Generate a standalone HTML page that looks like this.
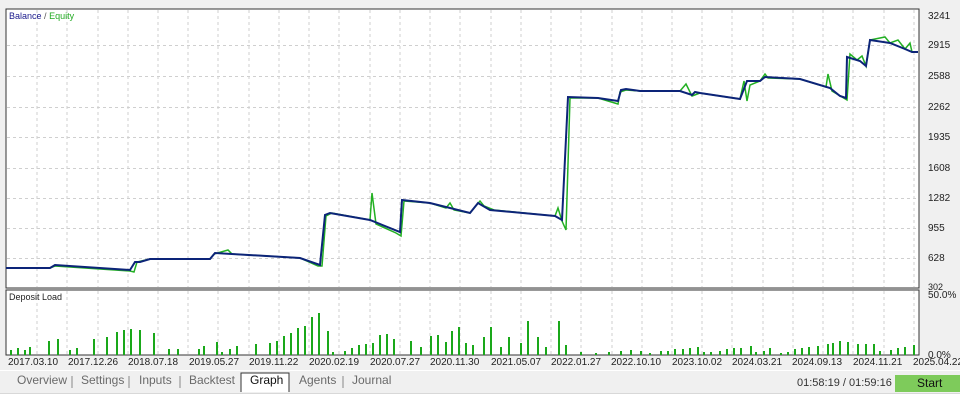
<!DOCTYPE html>
<html><head><meta charset="utf-8"><style>
body{margin:0;width:960px;height:405px;background:#f0f0f0;font-family:"Liberation Sans",sans-serif;position:relative;overflow:hidden}
.t{position:absolute;font-size:10px;color:#222}
.tab{position:absolute;top:373px;font-size:12px;color:#6a6a6a}
</style></head><body>
<svg width="960" height="405" style="position:absolute;left:0;top:0">
<rect x="6" y="9" width="913" height="279" fill="#fff" stroke="#333" stroke-width="1"/>
<rect x="6" y="290" width="913" height="65" fill="#fff" stroke="#333" stroke-width="1"/>
<g stroke="#cfcfcf" stroke-dasharray="3,3" stroke-width="1" id="g">
<path d="M37 10V287M67 10V287M98 10V287M128 10V287M158 10V287M188 10V287M218 10V287M249 10V287M279 10V287M309 10V287M339 10V287M370 10V287M400 10V287M430 10V287M460 10V287M491 10V287M521 10V287M551 10V287M581 10V287M612 10V287M642 10V287M672 10V287M702 10V287M732 10V287M763 10V287M793 10V287M823 10V287M853 10V287M884 10V287M914 10V287"/>
<path d="M37 291V354M67 291V354M98 291V354M128 291V354M158 291V354M188 291V354M218 291V354M249 291V354M279 291V354M309 291V354M339 291V354M370 291V354M400 291V354M430 291V354M460 291V354M491 291V354M521 291V354M551 291V354M581 291V354M612 291V354M642 291V354M672 291V354M702 291V354M732 291V354M763 291V354M793 291V354M823 291V354M853 291V354M884 291V354M914 291V354"/>
<path d="M7 45.5H918M7 76.5H918M7 107.5H918M7 137.5H918M7 168.5H918M7 198.5H918M7 228.5H918M7 258.5H918"/>
</g>
<polyline fill="none" stroke="#22b022" stroke-width="1.5" points="6,268 50,268 55,266 130,271 134,272 137,262 150,259 210,259 214,254 228,250 232,254 300,258 318,266 322,266 326,216 332,213 370,220 372,193 376,224 396,233 401,236 404,201 430,203 446,208 450,203 454,210 470,213 480,201 484,206 494,210 555,216 558,208 562,221 566,230 570,98 598,98 618,104 620,92 626,90 640,91 680,91 686,84 692,96 700,93 740,99 744,81 747,101 750,85 760,81 765,74 768,78 800,79 826,87 828,74 832,91 842,97 847,100 850,54 857,60 862,56 866,66 870,40 885,37 890,43 898,40 905,49 910,43 912,52 918,52"/>
<polyline fill="none" stroke="#0c2478" stroke-width="2" points="6,268 50,268 55,265 130,270 135,262 140,262 150,259 210,259 215,253 300,258 320,265 325,215 330,213 370,220 400,232 402,200 430,203 470,213 478,203 490,210 555,216 562,220 568,97 598,98 618,101 621,90 626,89 640,91 680,91 692,95 695,92 700,93 740,99 747,81 760,81 765,77 800,79 830,88 840,96 846,98 847,57 860,61 866,66 870,40 890,43 905,49 912,52 918,52"/>
<g fill="#1aa81a">
<rect x="10" y="350" width="2" height="5"/><rect x="17" y="348" width="2" height="7"/><rect x="24" y="350" width="2" height="5"/><rect x="29" y="347" width="2" height="8"/><rect x="48" y="341" width="2" height="14"/><rect x="57" y="339" width="2" height="16"/><rect x="69" y="350" width="2" height="5"/><rect x="76" y="348" width="2" height="7"/><rect x="93" y="339" width="2" height="16"/><rect x="106" y="337" width="2" height="18"/><rect x="116" y="332" width="2" height="23"/><rect x="123" y="330" width="2" height="25"/><rect x="130" y="329" width="2" height="26"/><rect x="139" y="330" width="2" height="25"/><rect x="153" y="333" width="2" height="22"/><rect x="168" y="349" width="2" height="6"/><rect x="177" y="349" width="2" height="6"/><rect x="198" y="349" width="2" height="6"/><rect x="203" y="346" width="2" height="9"/><rect x="216" y="342" width="2" height="13"/><rect x="221" y="352" width="2" height="3"/><rect x="229" y="349" width="2" height="6"/><rect x="236" y="346" width="2" height="9"/><rect x="255" y="344" width="2" height="11"/><rect x="269" y="343" width="2" height="12"/><rect x="276" y="341" width="2" height="14"/><rect x="283" y="336" width="2" height="19"/><rect x="290" y="333" width="2" height="22"/><rect x="297" y="328" width="2" height="27"/><rect x="304" y="326" width="2" height="29"/><rect x="311" y="317" width="2" height="38"/><rect x="318" y="313" width="2" height="42"/><rect x="327" y="331" width="2" height="24"/><rect x="332" y="352" width="2" height="3"/><rect x="344" y="351" width="2" height="4"/><rect x="351" y="348" width="2" height="7"/><rect x="358" y="345" width="2" height="10"/><rect x="365" y="344" width="2" height="11"/><rect x="372" y="343" width="2" height="12"/><rect x="379" y="335" width="2" height="20"/><rect x="386" y="334" width="2" height="21"/><rect x="393" y="339" width="2" height="16"/><rect x="410" y="341" width="2" height="14"/><rect x="420" y="347" width="2" height="8"/><rect x="430" y="336" width="2" height="19"/><rect x="437" y="335" width="2" height="20"/><rect x="445" y="342" width="2" height="13"/><rect x="451" y="331" width="2" height="24"/><rect x="458" y="327" width="2" height="28"/><rect x="465" y="343" width="2" height="12"/><rect x="472" y="345" width="2" height="10"/><rect x="483" y="337" width="2" height="18"/><rect x="490" y="327" width="2" height="28"/><rect x="500" y="347" width="2" height="8"/><rect x="508" y="337" width="2" height="18"/><rect x="520" y="343" width="2" height="12"/><rect x="527" y="321" width="2" height="34"/><rect x="537" y="337" width="2" height="18"/><rect x="545" y="347" width="2" height="8"/><rect x="558" y="321" width="2" height="34"/><rect x="565" y="345" width="2" height="10"/><rect x="580" y="352" width="2" height="3"/><rect x="595" y="353" width="2" height="2"/><rect x="608" y="352" width="2" height="3"/><rect x="620" y="351" width="2" height="4"/><rect x="630" y="350" width="2" height="5"/><rect x="640" y="351" width="2" height="4"/>
<rect x="649" y="353" width="2" height="2"/><rect x="660" y="351" width="2" height="4"/><rect x="667" y="351" width="2" height="4"/><rect x="674" y="349" width="2" height="6"/><rect x="682" y="349" width="2" height="6"/><rect x="689" y="348" width="2" height="7"/><rect x="697" y="347" width="2" height="8"/><rect x="703" y="352" width="2" height="3"/><rect x="710" y="352" width="2" height="3"/><rect x="719" y="351" width="2" height="4"/><rect x="726" y="349" width="2" height="6"/><rect x="733" y="348" width="2" height="7"/><rect x="740" y="348" width="2" height="7"/><rect x="750" y="346" width="2" height="9"/><rect x="755" y="352" width="2" height="3"/><rect x="763" y="351" width="2" height="4"/><rect x="769" y="348" width="2" height="7"/><rect x="780" y="353" width="2" height="2"/><rect x="787" y="352" width="2" height="3"/><rect x="794" y="349" width="2" height="6"/><rect x="801" y="348" width="2" height="7"/><rect x="808" y="347" width="2" height="8"/><rect x="817" y="346" width="2" height="9"/><rect x="827" y="344" width="2" height="11"/><rect x="832" y="343" width="2" height="12"/><rect x="839" y="341" width="2" height="14"/><rect x="847" y="342" width="2" height="13"/><rect x="857" y="344" width="2" height="11"/><rect x="865" y="344" width="2" height="11"/><rect x="873" y="344" width="2" height="11"/><rect x="879" y="351" width="2" height="4"/><rect x="890" y="350" width="2" height="5"/><rect x="897" y="348" width="2" height="7"/><rect x="904" y="347" width="2" height="8"/><rect x="913" y="345" width="2" height="10"/>
</g>
<rect x="0" y="370" width="960" height="1" fill="#fff"/>
<rect x="0" y="393" width="960" height="1" fill="#d8d8d8"/>
<rect x="0" y="394" width="960" height="11" fill="#fff"/>
<path d="M241 392V373H289V392" fill="#fff" stroke="#333"/>
<rect x="895" y="375" width="65" height="17" fill="#7ecb5b"/>
<path d="M72 376V388M129 376V388M180 376V388M343 376V388" stroke="#888"/>
</svg>
<div class="t" style="left:9px;top:11px;font-size:9px"><span style="color:#1a1a8c">Balance</span> <span style="color:#555">/</span> <span style="color:#22aa22">Equity</span></div>
<div class="t" style="left:9px;top:292px;font-size:9px">Deposit Load</div>
<div class="t" style="left:928px;top:11px">3241</div>
<div class="t" style="left:928px;top:40px">2915</div>
<div class="t" style="left:928px;top:71px">2588</div>
<div class="t" style="left:928px;top:102px">2262</div>
<div class="t" style="left:928px;top:132px">1935</div>
<div class="t" style="left:928px;top:163px">1608</div>
<div class="t" style="left:928px;top:193px">1282</div>
<div class="t" style="left:928px;top:223px">955</div>
<div class="t" style="left:928px;top:253px">628</div>
<div class="t" style="left:928px;top:282px;font-size:9px">302</div>
<div class="t" style="left:928px;top:290px">50.0%</div>
<div class="t" style="left:928px;top:350px">0.0%</div>
<div class="t" style="left:8px;top:357px">2017.03.10</div>
<div class="t" style="left:68px;top:357px">2017.12.26</div>
<div class="t" style="left:128px;top:357px">2018.07.18</div>
<div class="t" style="left:189px;top:357px">2019.05.27</div>
<div class="t" style="left:249px;top:357px">2019.11.22</div>
<div class="t" style="left:309px;top:357px">2020.02.19</div>
<div class="t" style="left:370px;top:357px">2020.07.27</div>
<div class="t" style="left:430px;top:357px">2020.11.30</div>
<div class="t" style="left:491px;top:357px">2021.05.07</div>
<div class="t" style="left:551px;top:357px">2022.01.27</div>
<div class="t" style="left:611px;top:357px">2022.10.10</div>
<div class="t" style="left:672px;top:357px">2023.10.02</div>
<div class="t" style="left:732px;top:357px">2024.03.21</div>
<div class="t" style="left:792px;top:357px">2024.09.13</div>
<div class="t" style="left:853px;top:357px">2024.11.21</div>
<div class="t" style="left:913px;top:357px">2025.04.22</div>
<div class="tab" style="left:17px">Overview</div>
<div class="tab" style="left:81px">Settings</div>
<div class="tab" style="left:139px">Inputs</div>
<div class="tab" style="left:189px">Backtest</div>
<div class="tab" style="left:250px;color:#111">Graph</div>
<div class="tab" style="left:299px">Agents</div>
<div class="tab" style="left:352px">Journal</div>
<div class="t" style="left:797px;top:377px;font-size:11px;color:#333">01:58:19 / 01:59:16</div>
<div class="t" style="left:917px;top:376px;font-size:12px;color:#111">Start</div>
</body></html>
